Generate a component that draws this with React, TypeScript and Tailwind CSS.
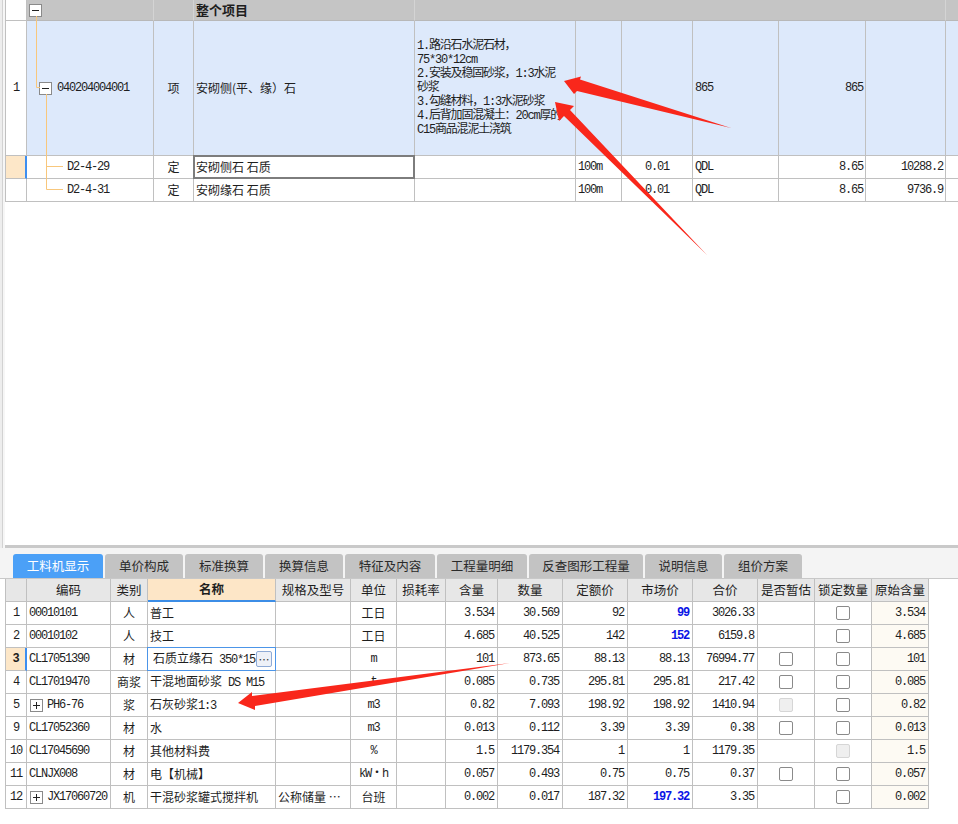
import type { ReactNode } from 'react';

const MONO = "font-['Liberation_Mono','Noto_Sans_CJK_SC',monospace] text-[12px] tracking-[-1.2px]";

function M({ children, bold, className = '' }: { children: ReactNode; bold?: boolean; className?: string }) {
  return <span className={`${MONO} ${bold ? 'font-bold text-[#0a14e6]' : ''} ${className}`}>{children}</span>;
}

function ExpandBox({ plus, className = '' }: { plus?: boolean; className?: string }) {
  return (
    <span className={`relative flex h-[13px] w-[13px] shrink-0 items-center justify-center border border-[#8a8a8a] bg-white ${className}`}>
      <span className="h-px w-[7px] bg-[#222]" />
      {plus && <span className="absolute h-[7px] w-px bg-[#222]" />}
    </span>
  );
}

function Check({ disabled }: { disabled?: boolean }) {
  return (
    <span
      className={`block h-[14px] w-[14px] rounded-[2px] border ${
        disabled ? 'border-[#d6d6d6] bg-[#efefef]' : 'border-[#8a8a8a] bg-white'
      }`}
    />
  );
}

const HC = 'shrink-0 border-r border-b border-r-[#d4d4d4] border-b-[#b8b8b8] bg-[#c5c5c5]';
const C = 'shrink-0 flex items-center overflow-hidden whitespace-nowrap border-r border-b border-[#c0c0c0]';
const BLUE = 'bg-[#dde9fb]';

const desc = [
  '1.路沿石水泥石材，',
  '75*30*12cm',
  '2.安装及稳固砂浆，1:3水泥',
  '砂浆',
  '3.勾缝材料，1:3水泥砂浆',
  '4.后背加固混凝土：20cm厚的',
  'C15商品混泥土浇筑',
];

function TopTable() {
  return (
    <div className="relative border-l border-[#c0c0c0] text-[12px]">
      <div className="flex h-[21px]">
        <div className="w-[21px] shrink-0 border-r border-b border-[#c0c0c0] bg-white" />
        <div className={`${HC} flex w-[127px] items-center`}>
          <ExpandBox className="ml-[2px]" />
        </div>
        <div className={`${HC} w-[40px]`} />
        <div className={`${HC} flex w-[221px] items-center pl-[2px] text-[13px] font-bold`}>整个项目</div>
        <div className={`${HC} w-[531px]`} />
        <div className="min-w-0 flex-1 border-b border-[#b8b8b8] bg-[#c5c5c5]" />
      </div>

      <div className="flex h-[135px]">
        <div className={`${C} w-[21px] justify-center bg-white`}>
          <M>1</M>
        </div>
        <div className={`${C} w-[127px] ${BLUE}`}>
          <ExpandBox className="ml-[12px]" />
          <M className="ml-[5px]">040204004001</M>
        </div>
        <div className={`${C} w-[40px] justify-center ${BLUE}`}>项</div>
        <div className={`${C} w-[221px] pl-[2px] ${BLUE}`}>安砌侧(平、缘）石</div>
        <div className={`${C} w-[161px] pl-[2px] ${BLUE}`}>
          <div className={`${MONO} leading-[14px]`}>
            {desc.map((l) => (
              <div key={l}>{l}</div>
            ))}
          </div>
        </div>
        <div className={`${C} w-[46px] ${BLUE}`} />
        <div className={`${C} w-[71px] ${BLUE}`} />
        <div className={`${C} w-[86px] pl-[2px] ${BLUE}`}>
          <M>865</M>
        </div>
        <div className={`${C} w-[87px] justify-end pr-[2px] ${BLUE}`}>
          <M>865</M>
        </div>
        <div className={`${C} w-[80px] ${BLUE}`} />
        <div className={`min-w-0 flex-1 border-b border-[#c0c0c0] ${BLUE}`} />
      </div>

      {[
        { code: 'D2-4-29', name: '安砌侧石 石质', total: '10288.2', sel: true },
        { code: 'D2-4-31', name: '安砌缘石 石质', total: '9736.9', sel: false },
      ].map((r) => (
        <div key={r.code} className="flex h-[23px]">
          <div
            className={`${C} w-[21px] ${r.sel ? 'border-r-2 border-r-[#3d8ef0] bg-[#fde7c8]' : 'bg-white'}`}
          />
          <div className={`${C} w-[127px] pl-[40px]`}>
            <M>{r.code}</M>
          </div>
          <div className={`${C} w-[40px] justify-center`}>定</div>
          <div className={`${C} relative w-[221px] overflow-visible pl-[2px]`}>
            <span>{r.name}</span>
            {r.sel && <div className="absolute -top-px -right-px -bottom-px -left-px border-2 border-[#7d7d7d]" />}
          </div>
          <div className={`${C} w-[161px]`} />
          <div className={`${C} w-[46px] pl-[2px]`}>
            <M>100m</M>
          </div>
          <div className={`${C} w-[71px] justify-center`}>
            <M>0.01</M>
          </div>
          <div className={`${C} w-[86px] pl-[2px]`}>
            <M>QDL</M>
          </div>
          <div className={`${C} w-[87px] justify-end pr-[2px]`}>
            <M>8.65</M>
          </div>
          <div className={`${C} w-[80px] justify-end pr-[2px]`}>
            <M>{r.total}</M>
          </div>
          <div className="min-w-0 flex-1 border-b border-[#c0c0c0]" />
        </div>
      ))}

      {/* tree connector lines */}
      <svg className="pointer-events-none absolute left-0 top-0" width="80" height="201">
        <g stroke="#f8c77c" strokeWidth="1" fill="none">
          <path d="M30.5 16 V87.5 H34" />
          <path d="M40.5 94 V189.5 H57" />
          <path d="M40.5 166.5 H57" />
        </g>
      </svg>
    </div>
  );
}

const tabs = ['工料机显示', '单价构成', '标准换算', '换算信息', '特征及内容', '工程量明细', '反查图形工程量', '说明信息', '组价方案'];
const tabW = ['w-[90px]', 'w-[78px]', 'w-[78px]', 'w-[78px]', 'w-[90px]', 'w-[90px]', 'w-[114px]', 'w-[77px]', 'w-[78px]'];

const W = [
  'w-[21px]',
  'w-[84px]',
  'w-[37px]',
  'w-[128px]',
  'w-[75px]',
  'w-[46px]',
  'w-[49px]',
  'w-[52px]',
  'w-[65px]',
  'w-[65px]',
  'w-[65px]',
  'w-[65px]',
  'w-[57px]',
  'w-[57px]',
  'w-[57px]',
];
const heads = ['', '编码', '类别', '名称', '规格及型号', '单位', '损耗率', '含量', '数量', '定额价', '市场价', '合价', '是否暂估', '锁定数量', '原始含量'];

type Row = {
  n: string;
  code: string;
  plus?: boolean;
  type: string;
  name: ReactNode;
  spec?: ReactNode;
  unit: string;
  content: string;
  qty: string;
  quota: string;
  market: string;
  blue?: boolean;
  total: string;
  est: 'cb' | 'dis' | null;
  lock: 'cb' | 'dis';
  sel?: boolean;
};

const rows: Row[] = [
  { n: '1', code: '00010101', type: '人', name: '普工', unit: '工日', content: '3.534', qty: '30.569', quota: '92', market: '99', blue: true, total: '3026.33', est: null, lock: 'cb' },
  { n: '2', code: '00010102', type: '人', name: '技工', unit: '工日', content: '4.685', qty: '40.525', quota: '142', market: '152', blue: true, total: '6159.8', est: null, lock: 'cb' },
  {
    n: '3',
    code: 'CL17051390',
    type: '材',
    name: (
      <>
        石质立缘石<M> 350*15</M>
      </>
    ),
    unit: 'm',
    content: '101',
    qty: '873.65',
    quota: '88.13',
    market: '88.13',
    total: '76994.77',
    est: 'cb',
    lock: 'cb',
    sel: true,
  },
  {
    n: '4',
    code: 'CL17019470',
    type: '商浆',
    name: (
      <>
        干混地面砂浆<M> DS M15</M>
      </>
    ),
    unit: 't',
    content: '0.085',
    qty: '0.735',
    quota: '295.81',
    market: '295.81',
    total: '217.42',
    est: 'cb',
    lock: 'cb',
  },
  {
    n: '5',
    code: 'PH6-76',
    plus: true,
    type: '浆',
    name: (
      <>
        石灰砂浆<M>1:3</M>
      </>
    ),
    unit: 'm3',
    content: '0.82',
    qty: '7.093',
    quota: '198.92',
    market: '198.92',
    total: '1410.94',
    est: 'dis',
    lock: 'cb',
  },
  { n: '9', code: 'CL17052360', type: '材', name: '水', unit: 'm3', content: '0.013', qty: '0.112', quota: '3.39', market: '3.39', total: '0.38', est: 'cb', lock: 'cb' },
  { n: '10', code: 'CL17045690', type: '材', name: '其他材料费', unit: '%', content: '1.5', qty: '1179.354', quota: '1', market: '1', total: '1179.35', est: null, lock: 'dis' },
  { n: '11', code: 'CLNJX008', type: '材', name: '电【机械】', unit: 'kW・h', content: '0.057', qty: '0.493', quota: '0.75', market: '0.75', total: '0.37', est: 'cb', lock: 'cb' },
  {
    n: '12',
    code: 'JX17060720',
    plus: true,
    type: '机',
    name: '干混砂浆罐式搅拌机',
    spec: '公称储量 ⋯',
    unit: '台班',
    content: '0.002',
    qty: '0.017',
    quota: '187.32',
    market: '197.32',
    blue: true,
    total: '3.35',
    est: null,
    lock: 'cb',
  },
];

function BottomTable() {
  const BC = 'shrink-0 flex items-center overflow-hidden whitespace-nowrap border-r border-b border-[#c0c0c0]';
  const num = `${BC} justify-end pr-[3px]`;
  return (
    <div className="ml-[5px] w-[924px] border-l border-[#c0c0c0] text-[12px] text-[#1e1e1e]">
      <div className="flex h-[23px]">
        {heads.map((h, i) => (
          <div
            key={i}
            className={`${BC} ${W[i]} justify-center text-[12.5px] ${
              i === 3 ? 'border-b-2 border-b-[#3c8de6] bg-[#fde6c7] font-bold' : 'bg-[#e7e7e7]'
            }`}
          >
            {h}
          </div>
        ))}
      </div>
      {rows.map((r) => (
        <div key={r.n} className="flex h-[23px]">
          <div
            className={`${BC} ${W[0]} justify-center ${r.sel ? 'border-r-2 border-r-[#3d8ef0] bg-[#fde7c8]' : 'bg-white'}`}
          >
            <M className={r.sel ? 'font-bold' : ''}>{r.n}</M>
          </div>
          <div className={`${BC} ${W[1]} pl-[2px]`}>
            {r.plus && <ExpandBox plus className="ml-[1px] mr-[4px]" />}
            <M>{r.code}</M>
          </div>
          <div className={`${BC} ${W[2]} justify-center`}>{r.type}</div>
          <div className={`${BC} ${W[3]} relative overflow-visible ${r.sel ? 'pl-[5px]' : 'pl-[2px]'}`}>
            {r.sel ? (
              <>
                <span className="min-w-0 flex-1 overflow-hidden whitespace-nowrap">{r.name}</span>
                <span className="mr-[3px] flex h-[16px] w-[16px] shrink-0 items-center justify-center rounded-[2px] border border-[#8eaad6] bg-[#eef1f8] text-[11px] leading-none text-[#333]">
                  ⋯
                </span>
                <div className="absolute -top-px -right-px -bottom-px -left-px border border-[#4c95e8]" />
              </>
            ) : (
              <span className="whitespace-pre">{r.name}</span>
            )}
          </div>
          <div className={`${BC} ${W[4]} pl-[2px]`}>{r.spec}</div>
          <div className={`${BC} ${W[5]} justify-center`}>
            {/[a-z%]/i.test(r.unit) ? <M>{r.unit}</M> : r.unit}
          </div>
          <div className={`${BC} ${W[6]}`} />
          <div className={`${num} ${W[7]}`}>
            <M>{r.content}</M>
          </div>
          <div className={`${num} ${W[8]}`}>
            <M>{r.qty}</M>
          </div>
          <div className={`${num} ${W[9]}`}>
            <M>{r.quota}</M>
          </div>
          <div className={`${num} ${W[10]}`}>
            <M bold={r.blue}>{r.market}</M>
          </div>
          <div className={`${num} ${W[11]}`}>
            <M>{r.total}</M>
          </div>
          <div className={`${BC} ${W[12]} justify-center`}>{r.est && <Check disabled={r.est === 'dis'} />}</div>
          <div className={`${BC} ${W[13]} justify-center`}>
            <Check disabled={r.lock === 'dis'} />
          </div>
          <div className={`${num} ${W[14]} bg-[#fdfaf3]`}>
            <M>{r.content}</M>
          </div>
        </div>
      ))}
    </div>
  );
}

function Arrows() {
  return (
    <svg className="pointer-events-none absolute left-0 top-0" width="958" height="824">
      <g fill="#f9271b">
        <polygon points="564,81 581,76.5 580,79.5 731,128 577,91 574,94" />
        <polygon points="555,102 574,106 570,110 707,255 564,116 559,121" />
        <polygon points="238,703 252,692 252,696 510,663 255,706 255,710" />
      </g>
    </svg>
  );
}

export default function App() {
  return (
    <div className="relative h-[824px] w-[958px] overflow-hidden bg-white font-['Noto_Sans_CJK_SC',sans-serif] text-[#1e1e1e]">
      <div className="flex h-[548px]">
        <div className="flex w-[5px] shrink-0">
          <div className="w-[2px] bg-[#ededed]" />
          <div className="w-px bg-[#d2d2d2]" />
          <div className="w-[2px] bg-[#f6f6f6]" />
        </div>
        <div className="flex min-w-0 flex-1 flex-col">
          <TopTable />
          <div className="flex-1" />
          <div className="h-[3px] bg-[#c9c9c9]" />
        </div>
      </div>

      <div className="flex h-[31px] items-end gap-[2px] border-b border-[#c8c8c8] bg-[#f4f4f4] pl-[13px]">
        {tabs.map((t, i) => (
          <div
            key={t}
            className={`flex h-[24px] ${tabW[i]} items-center justify-center rounded-t-[3px] text-[12.5px] ${
              i === 0 ? 'bg-[#4ba0f7] text-white' : 'bg-[#c3c3c3] text-[#2a2a2a]'
            }`}
          >
            {t}
          </div>
        ))}
      </div>

      <BottomTable />

      <Arrows />
    </div>
  );
}
